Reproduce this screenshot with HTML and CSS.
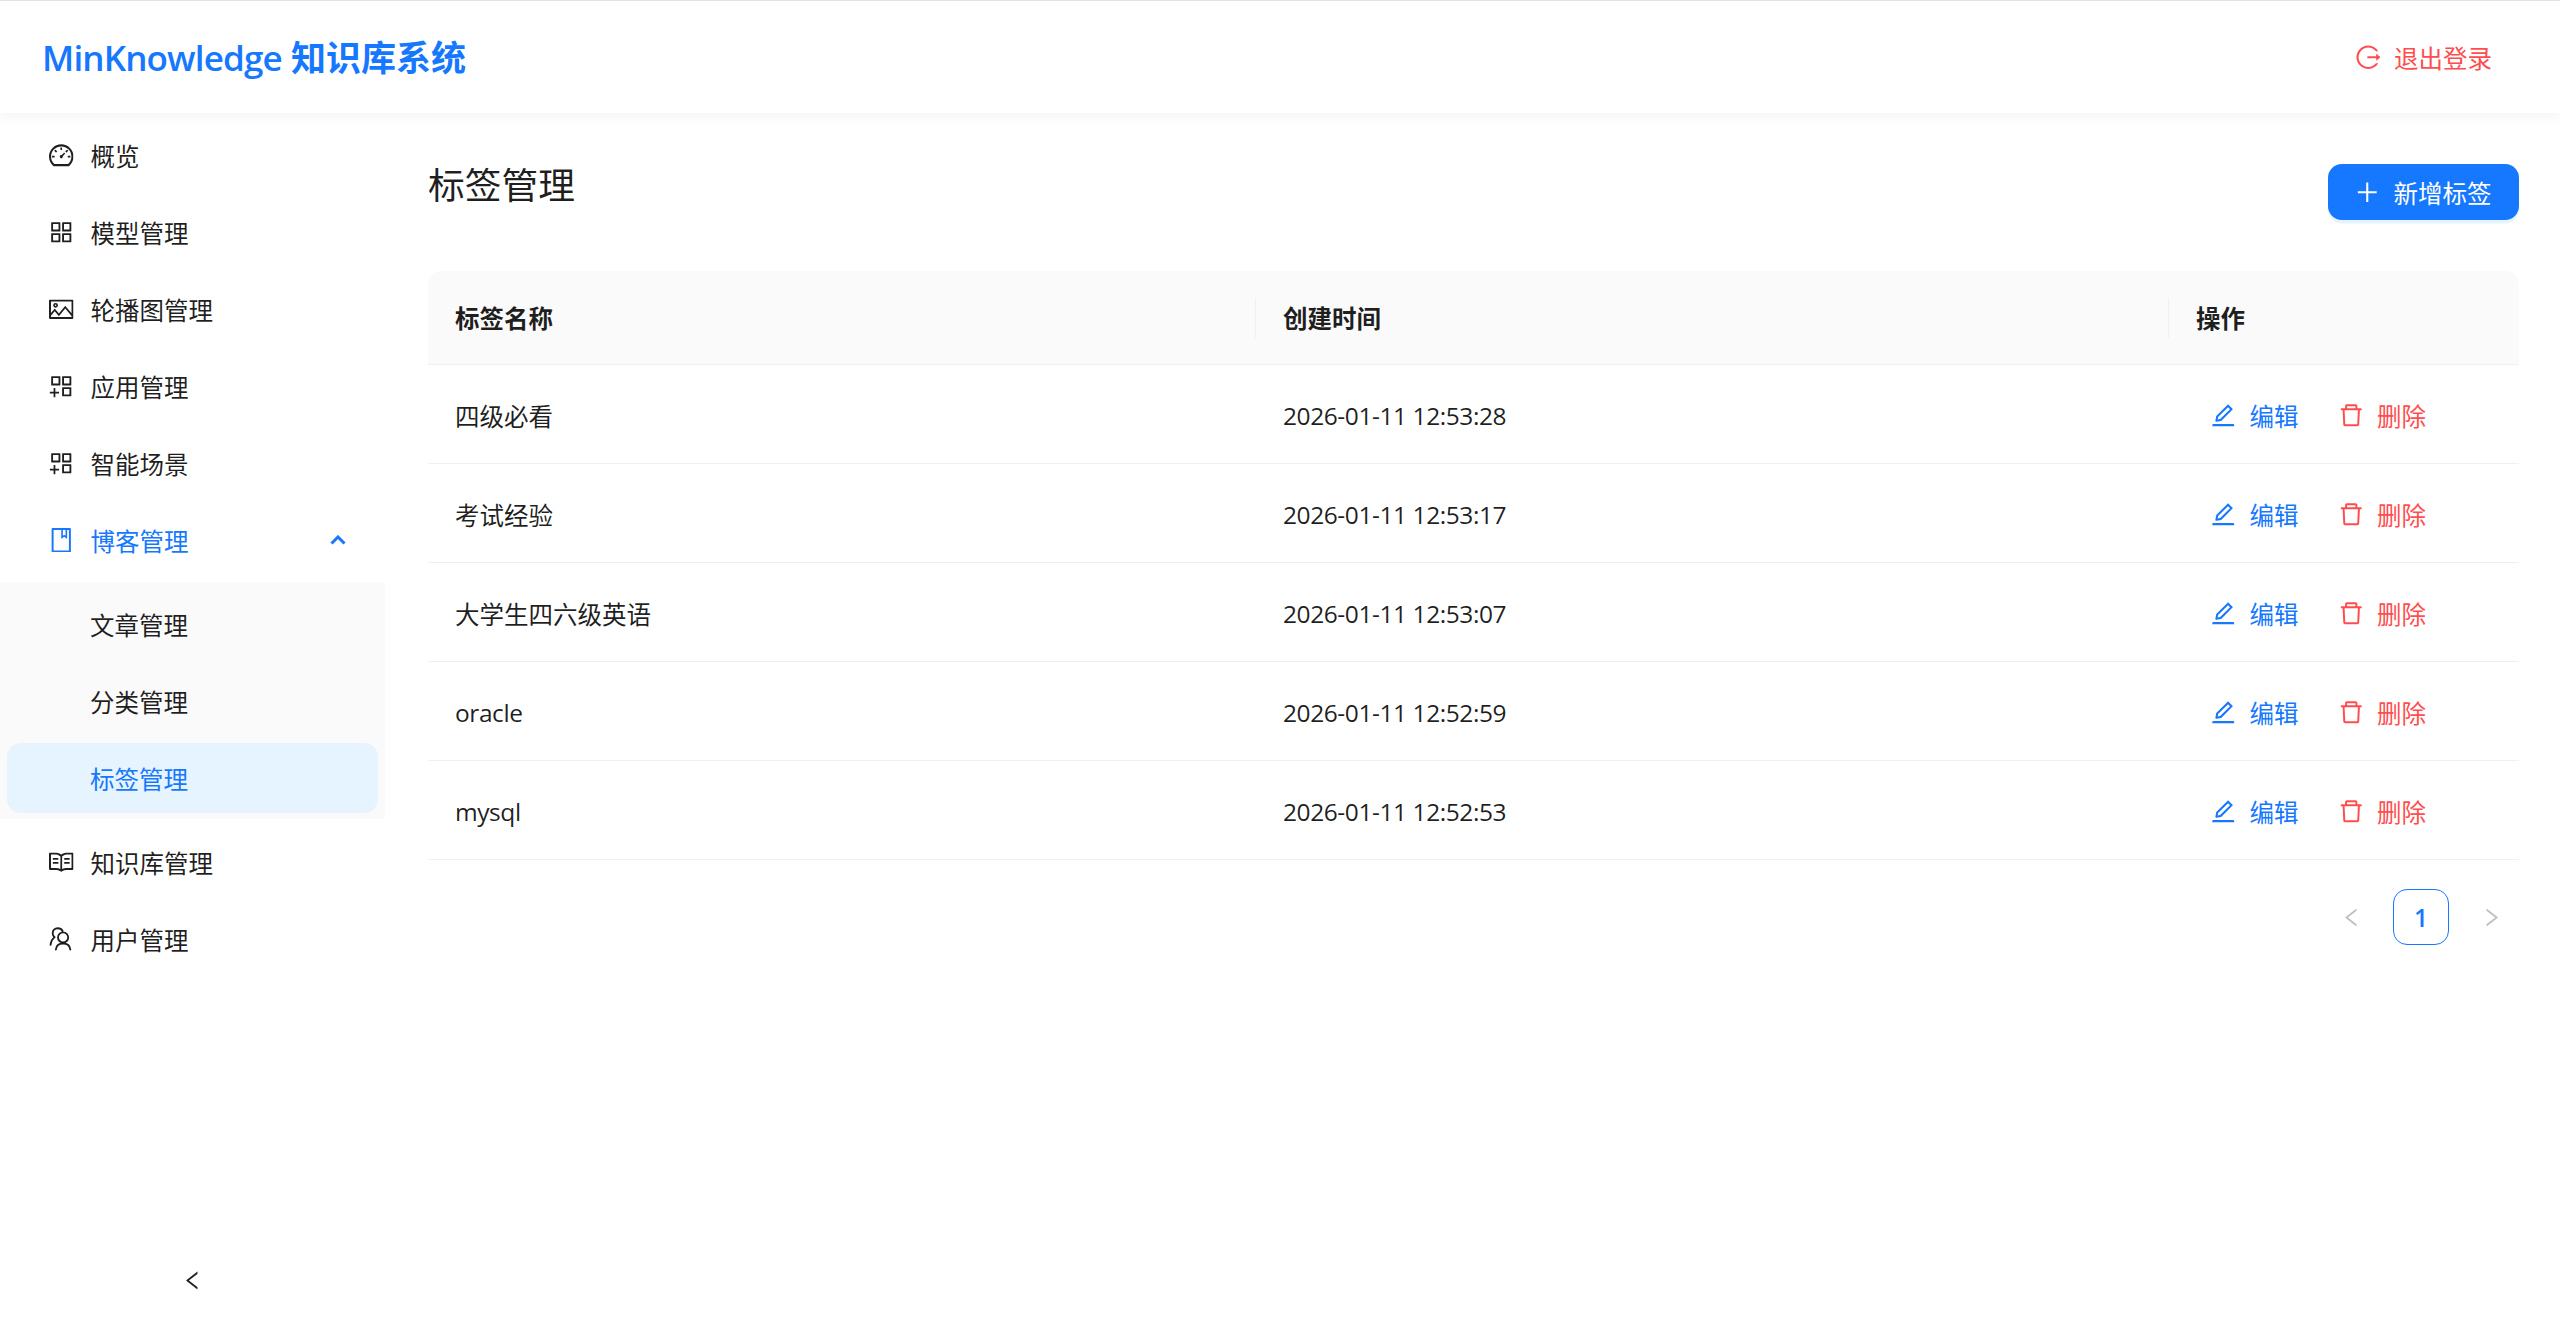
FILE: index.html
```html
<!DOCTYPE html>
<html lang="zh-CN">
<head>
    <meta charset="UTF-8">
    <meta name="viewport" content="width=device-width, initial-scale=1.0">
    <title>标签管理 - MinKnowledge</title>
    <link rel="stylesheet" href="styles.css">
</head>
<body>
    <svg class="icon-defs" xmlns="http://www.w3.org/2000/svg">
        <symbol id="i-dashboard" viewBox="64 64 896 896"><path d="M924.8 385.6a446.7 446.7 0 0 0-96-142.4 446.7 446.7 0 0 0-142.4-96C631.1 123.8 572.5 112 512 112s-119.1 11.8-174.4 35.2a446.7 446.7 0 0 0-142.4 96 446.7 446.7 0 0 0-96 142.4C75.8 440.9 64 499.5 64 560c0 132.7 58.3 257.7 159.9 343.1l1.7 1.4c5.8 4.8 13.1 7.5 20.6 7.5h531.7c7.5 0 14.8-2.7 20.6-7.5l1.7-1.4C901.7 817.7 960 692.7 960 560c0-60.5-11.9-119.1-35.2-174.4zM761.4 836H262.6A371.12 371.12 0 0 1 140 560c0-99.4 38.7-192.8 109-263 70.3-70.3 163.7-109 263-109 99.4 0 192.8 38.7 263 109 70.3 70.3 109 163.7 109 263 0 105.6-44.5 205.5-122.6 276zM623.5 421.5a8.03 8.03 0 0 0-11.3 0L527.7 506c-18.7-5-39.4-.2-54.1 14.5a55.95 55.95 0 0 0 0 79.2 55.95 55.95 0 0 0 79.2 0 55.87 55.87 0 0 0 14.5-54.1l84.5-84.5c3.1-3.1 3.1-8.2 0-11.3l-28.3-28.3zM490 320h44c4.4 0 8-3.6 8-8v-80c0-4.4-3.6-8-8-8h-44c-4.4 0-8 3.6-8 8v80c0 4.4 3.6 8 8 8zm260 218v44c0 4.4 3.6 8 8 8h80c4.4 0 8-3.6 8-8v-44c0-4.4-3.6-8-8-8h-80c-4.4 0-8 3.6-8 8zm12.7-197.2l-31.1-31.1a8.03 8.03 0 0 0-11.3 0l-56.6 56.6a8.03 8.03 0 0 0 0 11.3l31.1 31.1c3.1 3.1 8.2 3.1 11.3 0l56.6-56.6c3.1-3.1 3.1-8.2 0-11.3zm-458.6-31.1a8.03 8.03 0 0 0-11.3 0l-31.1 31.1a8.03 8.03 0 0 0 0 11.3l56.6 56.6c3.1 3.1 8.2 3.1 11.3 0l31.1-31.1c3.1-3.1 3.1-8.2 0-11.3l-56.6-56.6zM262 530h-80c-4.4 0-8 3.6-8 8v44c0 4.4 3.6 8 8 8h80c4.4 0 8-3.6 8-8v-44c0-4.4-3.6-8-8-8z"/></symbol>
        <symbol id="i-appstore" viewBox="64 64 896 896"><path d="M464 144H160c-8.8 0-16 7.2-16 16v304c0 8.8 7.2 16 16 16h304c8.8 0 16-7.2 16-16V160c0-8.8-7.2-16-16-16zm-52 268H212V212h200v200zm452-268H560c-8.8 0-16 7.2-16 16v304c0 8.8 7.2 16 16 16h304c8.8 0 16-7.2 16-16V160c0-8.8-7.2-16-16-16zm-52 268H612V212h200v200zM464 544H160c-8.8 0-16 7.2-16 16v304c0 8.8 7.2 16 16 16h304c8.8 0 16-7.2 16-16V560c0-8.8-7.2-16-16-16zm-52 268H212V612h200v200zm452-268H560c-8.8 0-16 7.2-16 16v304c0 8.8 7.2 16 16 16h304c8.8 0 16-7.2 16-16V560c0-8.8-7.2-16-16-16zm-52 268H612V612h200v200z"/></symbol>
        <symbol id="i-picture" viewBox="64 64 896 896"><path d="M928 160H96c-17.7 0-32 14.3-32 32v640c0 17.7 14.3 32 32 32h832c17.7 0 32-14.3 32-32V192c0-17.7-14.3-32-32-32zm-40 632H136v-39.9l138.5-164.3 150.1 178L658.1 489 888 761.6V792zm0-129.8L664.2 396.8c-3.2-3.8-9-3.8-12.2 0L424.6 666.4l-144-170.7c-3.2-3.8-9-3.8-12.2 0L136 652.7V232h752v430.2zM304 456a88 88 0 1 0 0-176 88 88 0 0 0 0 176zm0-116c15.5 0 28 12.5 28 28s-12.5 28-28 28-28-12.5-28-28 12.5-28 28-28z"/></symbol>
        <symbol id="i-appadd" viewBox="64 64 896 896"><path d="M464 144H160c-8.8 0-16 7.2-16 16v304c0 8.8 7.2 16 16 16h304c8.8 0 16-7.2 16-16V160c0-8.8-7.2-16-16-16zm-52 268H212V212h200v200zm452-268H560c-8.8 0-16 7.2-16 16v304c0 8.8 7.2 16 16 16h304c8.8 0 16-7.2 16-16V160c0-8.8-7.2-16-16-16zm-52 268H612V212h200v200zm52 132H560c-8.8 0-16 7.2-16 16v304c0 8.8 7.2 16 16 16h304c8.8 0 16-7.2 16-16V560c0-8.8-7.2-16-16-16zm-52 268H612V612h200v200zM424 712H296V584c0-4.4-3.6-8-8-8h-48c-4.4 0-8 3.6-8 8v128H104c-4.4 0-8 3.6-8 8v48c0 4.4 3.6 8 8 8h128v128c0 4.4 3.6 8 8 8h48c4.4 0 8-3.6 8-8V776h128c4.4 0 8-3.6 8-8v-48c0-4.4-3.6-8-8-8z"/></symbol>
        <symbol id="i-book" viewBox="64 64 896 896"><path d="M832 64H192c-17.7 0-32 14.3-32 32v832c0 17.7 14.3 32 32 32h640c17.7 0 32-14.3 32-32V96c0-17.7-14.3-32-32-32zm-260 72h96v209.9L621.5 312 572 347.4V136zm220 752H232V136h280v296.9c0 3.3 1 6.6 3 9.3a15.9 15.9 0 0 0 22.3 3.7l83.8-59.9 81.4 59.4c2.7 2 6 3.1 9.4 3.1 8.8 0 16-7.2 16-16V136h64v752z"/></symbol>
        <symbol id="i-read" viewBox="64 64 896 896"><path d="M928 161H699.2c-49.1 0-97.1 14.1-138.4 40.7L512 233l-48.8-31.3A255.2 255.2 0 0 0 324.8 161H96c-17.7 0-32 14.3-32 32v568c0 17.7 14.3 32 32 32h228.8c49.1 0 97.1 14.1 138.4 40.7l44.4 28.6c1.3.8 2.8 1.3 4.3 1.3s3-.4 4.3-1.3l44.4-28.6C602 807.1 650.1 793 699.2 793H928c17.7 0 32-14.3 32-32V193c0-17.7-14.3-32-32-32zM324.8 721H136V233h188.8c35.4 0 69.8 10.1 99.5 29.2l48.8 31.3 6.9 4.5v462c-47.6-25.6-100.8-39-155.2-39zm563.2 0H699.2c-54.4 0-107.6 13.4-155.2 39V298l6.9-4.5 48.8-31.3c29.7-19.1 64.1-29.2 99.5-29.2H888v488zM204 361h200v60H204zM204 505h204v60H204zM620 361h200v60H620zM620 505h200v60H620z"/></symbol>
        <symbol id="i-logout" viewBox="64 64 896 896"><path d="M868 732h-70.3c-4.8 0-9.3 2.1-12.3 5.8-7 8.5-14.5 16.7-22.4 24.5a353.84 353.84 0 0 1-112.7 75.9A352.8 352.8 0 0 1 512.4 866c-47.9 0-94.3-9.4-137.9-27.8a353.84 353.84 0 0 1-112.7-75.9 353.28 353.28 0 0 1-76-112.5C167.3 606.2 158 559.9 158 512s9.4-94.2 27.8-137.8c17.8-42.1 43.4-80 76-112.5s70.5-58.1 112.7-75.9c43.6-18.4 90-27.8 137.9-27.8 47.9 0 94.3 9.3 137.9 27.8 42.2 17.8 80.1 43.4 112.7 75.9 7.9 7.9 15.3 16.1 22.4 24.5 3 3.7 7.6 5.8 12.3 5.8H868c6.3 0 10.2-7 6.7-12.3C798 160.5 663.8 81.6 511.3 82 271.7 82.6 79.6 277.1 82 516.4 84.4 751.9 276.2 942 512.4 942c152.1 0 285.7-78.8 362.3-197.7 3.4-5.3-.4-12.3-6.7-12.3zm88.9-226.3L815 393.7c-5.3-4.2-13-.4-13 6.3v76H488c-4.4 0-8 3.6-8 8v56c0 4.4 3.6 8 8 8h314v76c0 6.7 7.8 10.5 13 6.3l141.9-112a8 8 0 0 0 0-12.6z"/></symbol>
        <symbol id="i-edit" viewBox="64 64 896 896"><path d="M257.7 752c2 0 4-.2 6-.5L431.9 722c2-.4 3.9-1.3 5.3-2.8l423.9-423.9a9.96 9.96 0 0 0 0-14.1L694.9 114.9c-1.9-1.9-4.4-2.9-7.1-2.9s-5.2 1-7.1 2.9L256.8 538.8c-1.5 1.5-2.4 3.3-2.8 5.3l-29.5 168.2a33.5 33.5 0 0 0 9.4 29.8c6.6 6.4 14.9 9.9 23.8 9.9zm67.4-174.4L687.8 215l73.3 73.3-362.7 362.6-88.9 15.7 15.6-89zM880 836H144c-17.7 0-32 14.3-32 32v36c0 4.4 3.6 8 8 8h784c4.4 0 8-3.6 8-8v-36c0-17.7-14.3-32-32-32z"/></symbol>
        <symbol id="i-delete" viewBox="64 64 896 896"><path d="M360 184h-8c4.4 0 8-3.6 8-8v8h304v-8c0 4.4 3.6 8 8 8h-8v72h72v-80c0-35.3-28.7-64-64-64H352c-35.3 0-64 28.7-64 64v80h72v-72zm504 72H160c-17.7 0-32 14.3-32 32v32c0 4.4 3.6 8 8 8h60.4l24.7 523c1.6 34.1 29.8 61 63.9 61h454c34.2 0 62.3-26.8 63.9-61l24.7-523H888c4.4 0 8-3.6 8-8v-32c0-17.7-14.3-32-32-32zM731.3 840H292.7l-24.2-512h487l-24.2 512z"/></symbol>
        <symbol id="i-plus" viewBox="64 64 896 896"><path d="M482 152h60q8 0 8 8v704q0 8-8 8h-60q-8 0-8-8V160q0-8 8-8z"/><path d="M176 474h672q8 0 8 8v60q0 8-8 8H176q-8 0-8-8v-60q0-8 8-8z"/></symbol>
        <symbol id="i-left" viewBox="64 64 896 896"><path d="M724 218.3V141c0-6.7-7.7-10.4-12.9-6.3L260.3 486.8a31.86 31.86 0 0 0 0 50.3l450.8 352.1c5.3 4.1 12.9.4 12.9-6.3v-77.3c0-4.9-2.3-9.6-6.1-12.6l-360-281 360-281.1c3.8-3 6.1-7.7 6.1-12.6z"/></symbol>
        <symbol id="i-right" viewBox="64 64 896 896"><path d="M765.7 486.8L314.9 134.7A7.97 7.97 0 0 0 302 141v77.3c0 4.9 2.3 9.6 6.1 12.6l360 281.1-360 281.1c-3.9 3-6.1 7.7-6.1 12.6V883c0 6.7 7.7 10.4 12.9 6.3l450.8-352.1a31.96 31.96 0 0 0 0-50.4z"/></symbol>
        <symbol id="i-users" viewBox="0 0 24 24"><g fill="none" stroke="currentColor" stroke-width="1.8" stroke-linecap="round"><circle cx="13.8" cy="10.2" r="5"/><path d="M6.700 22.200c.4-3.900 3.400-6 7.100-6s6.700 2.100 7.100 6"/><path d="M13.300 3.900C12.400 2.100 10.600 1.200 8.600 1.200 5.600 1.200 3.600 3.400 3.600 6c0 1.600.7 2.900 1.800 3.900C3.200 11.700 1.900 14 1.500 17.500"/></g></symbol>
    </svg>

    <header class="topbar">
        <h1 class="brand"><span class="brand-en">MinKnowledge</span> 知识库系统</h1>
        <a class="logout" href="#">
            <svg class="icon"><use href="#i-logout"/></svg>
            <span>退出登录</span>
        </a>
    </header>

    <div class="layout">
        <aside class="sider">
            <ul class="menu">
                <li class="menu-item"><svg class="icon"><use href="#i-dashboard"/></svg><span>概览</span></li>
                <li class="menu-item"><svg class="icon"><use href="#i-appstore"/></svg><span>模型管理</span></li>
                <li class="menu-item"><svg class="icon"><use href="#i-picture"/></svg><span>轮播图管理</span></li>
                <li class="menu-item"><svg class="icon"><use href="#i-appadd"/></svg><span>应用管理</span></li>
                <li class="menu-item"><svg class="icon"><use href="#i-appadd"/></svg><span>智能场景</span></li>
                <li class="menu-item open">
                    <svg class="icon"><use href="#i-book"/></svg><span>博客管理</span>
                    <svg class="arrow" viewBox="0 0 16 10"><path d="M1.500 8.500L8 2l6.500 6.500"/></svg>
                </li>
                <li>
                    <ul class="submenu">
                        <li class="menu-item">文章管理</li>
                        <li class="menu-item">分类管理</li>
                        <li class="menu-item selected">标签管理</li>
                    </ul>
                </li>
                <li class="menu-item"><svg class="icon"><use href="#i-read"/></svg><span>知识库管理</span></li>
                <li class="menu-item"><svg class="icon"><use href="#i-users"/></svg><span>用户管理</span></li>
            </ul>
            <div class="collapse-btn"><svg class="icon"><use href="#i-left"/></svg></div>
        </aside>

        <main class="content">
            <div class="page-head">
                <h2>标签管理</h2>
                <button class="add-btn" type="button">
                    <svg class="icon"><use href="#i-plus"/></svg>
                    <span>新增标签</span>
                </button>
            </div>

            <table class="tag-table">
                <thead>
                    <tr>
                        <th class="col-name">标签名称</th>
                        <th class="col-time">创建时间</th>
                        <th class="col-action">操作</th>
                    </tr>
                </thead>
                <tbody>
                    <tr>
                        <td>四级必看</td>
                        <td class="latin">2026-01-11 12:53:28</td>
                        <td><div class="actions">
                            <a class="act edit" href="#"><svg class="icon"><use href="#i-edit"/></svg>编辑</a>
                            <a class="act del" href="#"><svg class="icon"><use href="#i-delete"/></svg>删除</a>
                        </div></td>
                    </tr>
                    <tr>
                        <td>考试经验</td>
                        <td class="latin">2026-01-11 12:53:17</td>
                        <td><div class="actions">
                            <a class="act edit" href="#"><svg class="icon"><use href="#i-edit"/></svg>编辑</a>
                            <a class="act del" href="#"><svg class="icon"><use href="#i-delete"/></svg>删除</a>
                        </div></td>
                    </tr>
                    <tr>
                        <td>大学生四六级英语</td>
                        <td class="latin">2026-01-11 12:53:07</td>
                        <td><div class="actions">
                            <a class="act edit" href="#"><svg class="icon"><use href="#i-edit"/></svg>编辑</a>
                            <a class="act del" href="#"><svg class="icon"><use href="#i-delete"/></svg>删除</a>
                        </div></td>
                    </tr>
                    <tr>
                        <td class="latin">oracle</td>
                        <td class="latin">2026-01-11 12:52:59</td>
                        <td><div class="actions">
                            <a class="act edit" href="#"><svg class="icon"><use href="#i-edit"/></svg>编辑</a>
                            <a class="act del" href="#"><svg class="icon"><use href="#i-delete"/></svg>删除</a>
                        </div></td>
                    </tr>
                    <tr>
                        <td class="latin">mysql</td>
                        <td class="latin">2026-01-11 12:52:53</td>
                        <td><div class="actions">
                            <a class="act edit" href="#"><svg class="icon"><use href="#i-edit"/></svg>编辑</a>
                            <a class="act del" href="#"><svg class="icon"><use href="#i-delete"/></svg>删除</a>
                        </div></td>
                    </tr>
                </tbody>
            </table>

            <div class="pager">
                <span class="pager-arrow"><svg class="icon"><use href="#i-left"/></svg></span>
                <span class="pager-num">1</span>
                <span class="pager-arrow"><svg class="icon"><use href="#i-right"/></svg></span>
            </div>
        </main>
    </div>
</body>
</html>
```

FILE: styles.css
```css
* {
    margin: 0;
    padding: 0;
    box-sizing: border-box;
}

html, body {
    height: 100%;
    overflow: hidden;
}

body {
    display: flex;
    flex-direction: column;
    background-color: #ffffff;
    color: rgba(0, 0, 0, 0.88);
    font-family: "Open Sans", "Noto Sans CJK SC", sans-serif;
    font-size: 24.5px;
    border-top: 1px solid #e2e2e2;
}

a {
    text-decoration: none;
}

ul {
    list-style: none;
}

.icon-defs {
    position: absolute;
    width: 0;
    height: 0;
}

.icon {
    width: 24.5px;
    height: 24.5px;
    flex-shrink: 0;
    fill: currentColor;
}

/* top bar */
.topbar {
    display: flex;
    justify-content: space-between;
    align-items: center;
    height: 112px;
    padding: 0 68px 0 42px;
    flex-shrink: 0;
    position: relative;
    background-color: #ffffff;
    box-shadow: 0 2px 14px rgba(0, 0, 0, 0.06);
}

.brand {
    padding-bottom: 3px;
    font-size: 35px;
    font-weight: 600;
    color: #1677ff;
}

.brand-en {
    font-weight: 550;
    letter-spacing: -0.85px;
}

.logout {
    display: flex;
    align-items: center;
    gap: 14px;
    color: #ff4d4f;
}

/* sidebar */
.layout {
    display: flex;
    flex: 1;
    min-height: 0;
}

.sider {
    display: flex;
    flex-direction: column;
    justify-content: space-between;
    width: 385px;
    flex-shrink: 0;
}

.menu {
    padding-top: 7px;
}

.menu-item {
    display: flex;
    align-items: center;
    gap: 17px;
    height: 70px;
    margin: 0 7px 7px;
    padding-left: 42px;
    border-radius: 14px;
}

.menu-item.open {
    color: #1677ff;
}

.arrow {
    width: 16px;
    height: 10px;
    margin-left: auto;
    margin-right: 32px;
    fill: none;
    stroke: currentColor;
    stroke-width: 3;
}

.submenu {
    padding: 7px 0 6px;
    margin-bottom: 8px;
    background-color: #fafafa;
}

.submenu .menu-item {
    padding-left: 83px;
}

.submenu .menu-item:last-child {
    margin-bottom: 0;
}

.menu-item.selected {
    background-color: #e6f4ff;
    color: #1677ff;
}

.collapse-btn {
    display: flex;
    justify-content: center;
    align-items: center;
    height: 84px;
    padding-top: 6px;
}

.collapse-btn .icon {
    width: 21px;
    height: 21px;
}

/* main area */
.content {
    flex: 1;
    min-width: 0;
    padding: 51px 41px 0 43px;
}

.page-head {
    display: flex;
    justify-content: space-between;
    align-items: flex-start;
    margin-bottom: 51px;
}

.page-head h2 {
    font-size: 36.75px;
    font-weight: 400;
    line-height: 42px;
}

.add-btn {
    display: flex;
    align-items: center;
    gap: 14px;
    height: 56px;
    padding: 0 27.5px;
    border: none;
    border-radius: 14px;
    background-color: #1677ff;
    color: #ffffff;
    font: inherit;
    box-shadow: 0 3.5px 0 rgba(5, 145, 255, 0.1);
}

/* table */
.tag-table {
    width: 100%;
    border-collapse: separate;
    border-spacing: 0;
    table-layout: fixed;
}

.col-name {
    width: 827px;
}

.col-action {
    width: 351px;
}

.tag-table th,
.tag-table td {
    padding: 0 28px;
    text-align: left;
    border-bottom: 1px solid #f0f0f0;
}

.tag-table th:first-child,
.tag-table td:first-child {
    padding-left: 27px;
}

.tag-table th {
    height: 94px;
    position: relative;
    background-color: #fafafa;
    font-weight: 600;
}

.tag-table th:first-child {
    border-top-left-radius: 14px;
}

.tag-table th:last-child {
    border-top-right-radius: 14px;
}

.tag-table th + th::before {
    content: "";
    position: absolute;
    left: 0;
    top: 50%;
    width: 1px;
    height: 40px;
    transform: translateY(-50%);
    background-color: #f0f0f0;
}

.tag-table td {
    height: 99px;
    padding-top: 2px;
}

.tag-table .latin {
    letter-spacing: -0.42px;
}

.actions {
    display: flex;
    gap: 40px;
    padding-left: 15px;
}

.act {
    display: flex;
    align-items: center;
    gap: 14px;
}

.act.edit {
    color: #1677ff;
}

.act.del {
    color: #ff4d4f;
}

/* pagination */
.pager {
    display: flex;
    justify-content: flex-end;
    gap: 14px;
    margin-top: 29px;
}

.pager-arrow,
.pager-num {
    display: flex;
    justify-content: center;
    align-items: center;
    width: 56px;
    height: 56px;
}

.pager-arrow {
    color: rgba(0, 0, 0, 0.25);
}

.pager-arrow .icon {
    width: 21px;
    height: 21px;
}

.pager-num {
    border: 1.75px solid #1677ff;
    border-radius: 14px;
    color: #1677ff;
    font-weight: 600;
}
```
